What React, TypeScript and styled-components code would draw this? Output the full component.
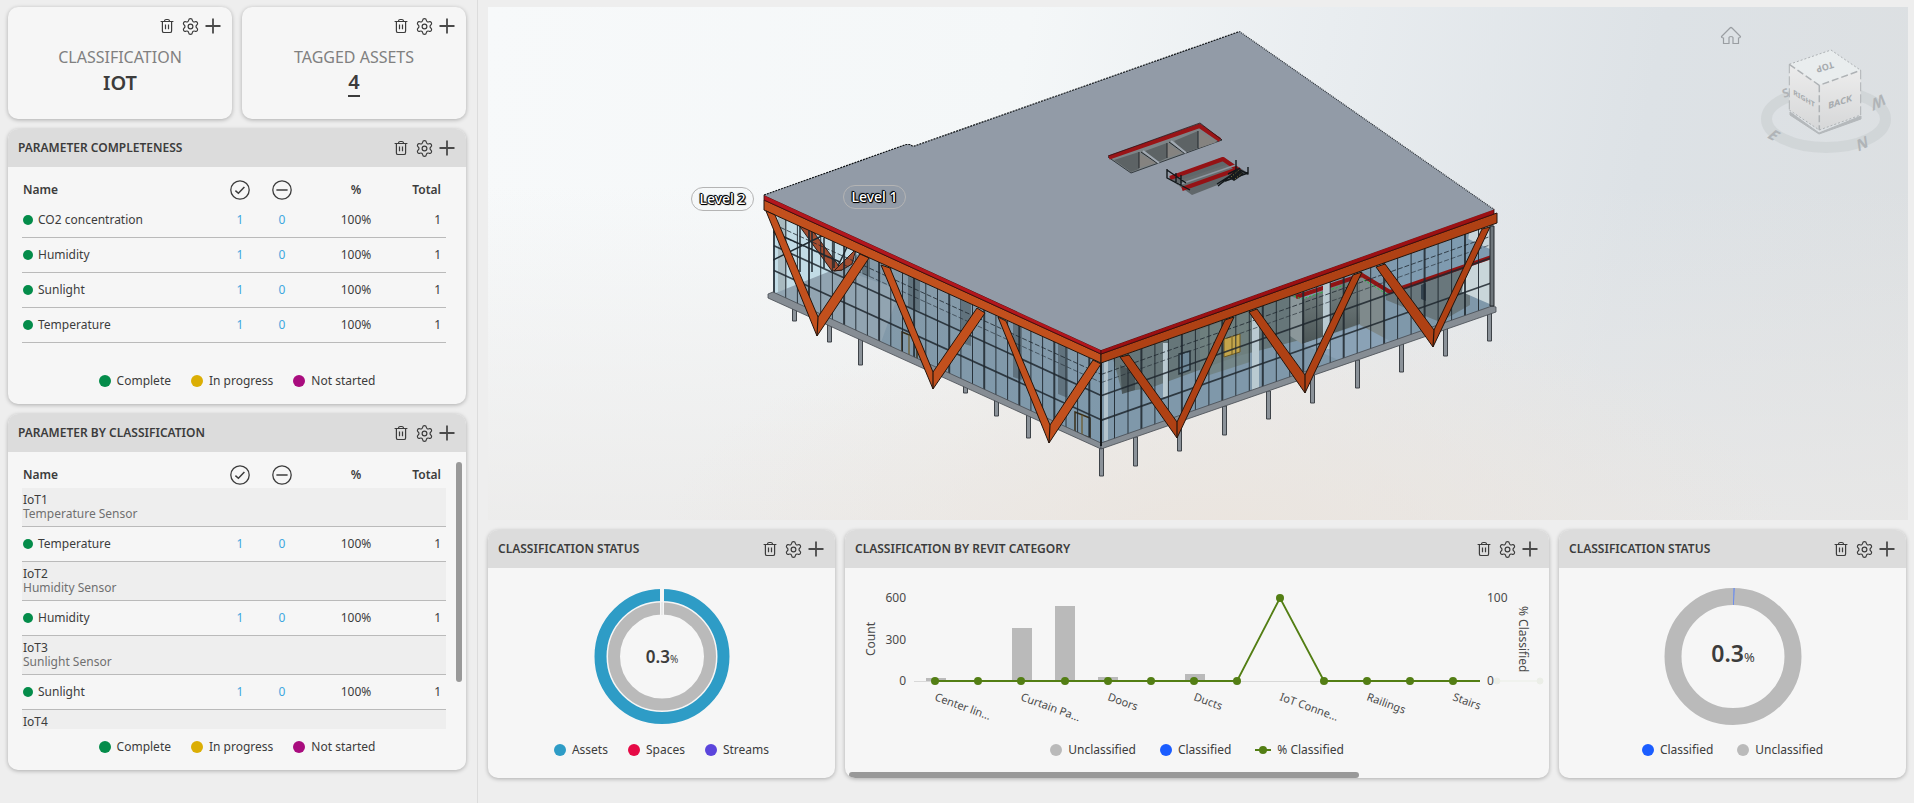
import React from "react";
import styled, { createGlobalStyle } from "styled-components";
import { Settings } from "lucide-react";

const GlobalStyle = createGlobalStyle`
  *, *::before, *::after { box-sizing: border-box; }
  body {
    margin: 0;
    background: #eeeeee;
    color: #3c3c3c;
    font-family: "Noto Sans", "Open Sans", sans-serif;
    font-size: 12px;
    line-height: 16px;
  }
  h2, h3, p, ul { margin: 0; padding: 0; }
  ul { list-style: none; }
`;

const Page = styled.div`
  display: flex;
  min-height: 100vh;
`;

const Sidebar = styled.aside`
  display: flex;
  flex-direction: column;
  flex: none;
  gap: 10px;
  width: 478px;
  padding: 7px 11px 24px 8px;
  border-right: 1px solid #dcdcdc;
`;

const Main = styled.main`
  display: flex;
  flex-direction: column;
  flex: 1;
  min-width: 0;
  gap: 10px;
  padding: 7px 6px 25px 10px;
`;

const MetricRow = styled.div`
  display: grid;
  grid-template-columns: 1fr 1fr;
  gap: 10px;
`;

const ChartRow = styled.div`
  display: grid;
  grid-template-columns: repeat(4, minmax(0, 1fr));
  gap: 10px;
  padding-right: 2px;
`;

const Card = styled.section<{ $span?: number }>`
  position: relative;
  display: flex;
  flex-direction: column;
  grid-column: span ${(p) => p.$span ?? 1};
  overflow: hidden;
  background: #f6f6f6;
  border-radius: 10px;
  box-shadow: 0 1px 4px rgba(0, 0, 0, 0.28);
`;

const CardHeader = styled.header`
  display: flex;
  align-items: center;
  justify-content: space-between;
  height: 38px;
  padding: 0 9px 0 10px;
  background: #dcdcdc;
`;

const CardTitle = styled.h2`
  font-size: 12px;
  font-weight: 600;
  text-transform: uppercase;
`;

const ActionBar = styled.div`
  display: flex;
  align-items: center;
  gap: 3px;
`;

const IconButton = styled.button`
  display: flex;
  align-items: center;
  justify-content: center;
  width: 20px;
  height: 20px;
  padding: 0;
  color: #3c3c3c;
  background: none;
  border: 0;
  cursor: pointer;
  svg { flex: none; }
`;

const Metric = styled(Card)`
  height: 112px;
  align-items: center;
  padding: 9px 9px 0;
  ${ActionBar} { align-self: flex-end; }
`;

const MetricLabel = styled.h2`
  margin-top: 9px;
  color: #808080;
  font-size: 16px;
  font-weight: 400;
  line-height: 24px;
`;

const MetricValue = styled.p`
  font-size: 20px;
  font-weight: 600;
  line-height: 28px;
`;

const MetricLink = styled.a`
  display: block;
  color: inherit;
  line-height: 26px;
  text-decoration: none;
  border-bottom: 2px solid #3c3c3c;
`;

const TableArea = styled.div<{ $height: number }>`
  display: flex;
  justify-content: space-between;
  height: ${(p) => p.$height}px;
  overflow: hidden;
  padding: 0 4px 0 14px;
`;

const VerticalThumb = styled.div`
  width: 6px;
  height: 220px;
  margin-top: 10px;
  background: #999999;
  border-radius: 3px;
`;

const HorizontalThumb = styled.div`
  position: absolute;
  bottom: 0;
  left: 4px;
  width: 510px;
  height: 6px;
  background: #999999;
  border-radius: 3px;
`;

const DataTable = styled.table`
  flex: none;
  align-self: flex-start;
  width: 424px;
  border-collapse: separate;
  border-spacing: 0;
  table-layout: fixed;
`;

const Cell = styled.td<{ $align?: string }>`
  height: 35px;
  padding: 0 5px 0 1px;
  text-align: ${(p) => p.$align ?? "left"};
  border-bottom: 1px solid #bababa;
`;

const CenterCell = styled(Cell)`
  padding: 0;
  text-align: center;
`;

const HeadCell = styled.th<{ $align?: string }>`
  height: 36px;
  padding: 10px 5px 0 1px;
  font-weight: 600;
  text-align: ${(p) => p.$align ?? "left"};
`;

const HeadCenter = styled(HeadCell)`
  padding: 10px 0 0;
  text-align: center;
  svg { display: block; margin: 0 auto; }
`;

const CountLink = styled.a`
  color: #3fa7e0;
  text-decoration: none;
`;

const NameLine = styled.span`
  display: flex;
  align-items: center;
  gap: 5px;
`;

const Dot = styled.span<{ $color: string; $size: number }>`
  flex: none;
  width: ${(p) => p.$size}px;
  height: ${(p) => p.$size}px;
  background: ${(p) => p.$color};
  border-radius: 50%;
`;

const GroupCell = styled.th`
  height: 39px;
  padding: 5px 1px 0;
  color: #3c3c3c;
  font-weight: 400;
  line-height: 14px;
  text-align: left;
  vertical-align: top;
  background: #eeeeee;
  border-bottom: 1px solid #bababa;
`;

const GroupNote = styled.span`
  display: block;
  color: #707070;
`;

const Legend = styled.ul<{ $tall?: boolean; $gap: number }>`
  display: flex;
  align-items: center;
  justify-content: center;
  gap: ${(p) => p.$gap}px;
  height: ${(p) => (p.$tall ? 50 : 41)}px;
  padding-bottom: 6px;
`;

const LegendItem = styled.li`
  display: flex;
  align-items: center;
  gap: 6px;
`;

const ChartArea = styled.div`
  display: flex;
  justify-content: center;
  height: 160px;
  svg { display: block; }
`;

const Viewer = styled.section`
  position: relative;
  flex: 1;
  min-height: 400px;
  overflow: hidden;
  background:
    radial-gradient(ellipse 40% 50% at 52% 106%, rgba(235, 228, 221, 0.9), rgba(235, 228, 221, 0)),
    linear-gradient(180deg, rgba(236, 236, 235, 0) 35%, rgba(234, 233, 232, 0.8) 100%),
    linear-gradient(100deg, #f7f9fa 0%, #f4f7f8 36%, #e9edf0 56%, #dde2e6 78%, #dcdfe1 100%);
`;

const Scene = styled.svg`
  position: absolute;
  inset: 0;
  width: 100%;
  height: 100%;
`;

const LevelTag = styled.button<{ $x: number; $y: number }>`
  position: absolute;
  left: ${(p) => p.$x}px;
  top: ${(p) => p.$y}px;
  width: 63px;
  height: 24px;
  padding: 0;
  color: #ffffff;
  font: 500 14px/22px "Noto Sans", sans-serif;
  text-shadow: 1px 0 #000, -1px 0 #000, 0 1px #000, 0 -1px #000, 1px 1px 1px #000, -1px -1px 1px #000;
  background: none;
  border: 1px solid #b4b4b4;
  border-radius: 12px;
`;

const HomeButton = styled.button`
  position: absolute;
  top: 18px;
  right: 165px;
  width: 24px;
  height: 24px;
  padding: 0;
  background: none;
  border: 0;
  svg { display: block; }
`;

const CubeDrawing = styled.svg`
  position: absolute;
  top: 33px;
  right: 8px;
`;

const TrashIcon = () => (
  <svg width="16" height="16" viewBox="0 0 16 16" fill="none" stroke="currentColor" strokeWidth="1.2">
    <path d="M1.6 3.5h12.8M5.3 3.4c.3-1.3 1-1.9 1.8-1.9h1.8c.8 0 1.5.6 1.8 1.9M3.4 3.6v9.3c0 1 .6 1.6 1.6 1.6h6c1 0 1.6-.6 1.6-1.6V3.6M6.5 6.6v4.6M9.5 6.6v4.6" />
  </svg>
);

const PlusIcon = () => (
  <svg width="16" height="16" viewBox="0 0 16 16" fill="none" stroke="#4a4a4a" strokeWidth="1.8">
    <path d="M8 .5v15M.5 8h15" />
  </svg>
);

const CheckCircle = () => (
  <svg width="20" height="20" viewBox="0 0 20 20" fill="none" stroke="#3c3c3c" strokeWidth="1.3" role="img" aria-label="Complete">
    <circle cx="10" cy="10" r="9.2" />
    <path d="M5.4 10.6l3 2.7 6-6.4" strokeWidth="1.5" />
  </svg>
);

const MinusCircle = () => (
  <svg width="20" height="20" viewBox="0 0 20 20" fill="none" stroke="#3c3c3c" strokeWidth="1.3" role="img" aria-label="Not started">
    <circle cx="10" cy="10" r="9.2" />
    <path d="M4.4 10h11.2" strokeWidth="1.6" />
  </svg>
);

const Actions = () => (
  <ActionBar>
    <IconButton aria-label="Delete"><TrashIcon /></IconButton>
    <IconButton aria-label="Settings"><Settings size={19} strokeWidth={1.5} /></IconButton>
    <IconButton aria-label="Add"><PlusIcon /></IconButton>
  </ActionBar>
);

type LegendEntry = { label: string; color: string; line?: boolean };

const STATUS_LEGEND: LegendEntry[] = [
  { label: "Complete", color: "#048c4a" },
  { label: "In progress", color: "#dbae04" },
  { label: "Not started", color: "#a90c7e" },
];

const LegendList = ({ entries, tall, gap = 20 }: { entries: LegendEntry[]; tall?: boolean; gap?: number }) => (
  <Legend $tall={tall} $gap={gap}>
    {entries.map((e) => (
      <LegendItem key={e.label}>
        {e.line ? (
          <svg width="16" height="12" viewBox="0 0 16 12">
            <path d="M0 6h16" stroke={e.color} strokeWidth="2" />
            <circle cx="8" cy="6" r="4" fill={e.color} />
          </svg>
        ) : (
          <Dot $color={e.color} $size={12} />
        )}
        {e.label}
      </LegendItem>
    ))}
  </Legend>
);

const TableHead = () => (
  <>
    <colgroup>
      <col />
      <col width="42" />
      <col width="42" />
      <col width="106" />
      <col width="37" />
    </colgroup>
    <thead>
      <tr>
        <HeadCell>Name</HeadCell>
        <HeadCenter><CheckCircle /></HeadCenter>
        <HeadCenter><MinusCircle /></HeadCenter>
        <HeadCenter>%</HeadCenter>
        <HeadCell $align="right">Total</HeadCell>
      </tr>
    </thead>
  </>
);

const ParameterRow = ({ name }: { name: string }) => (
  <tr>
    <Cell><NameLine><Dot $color="#048c4a" $size={10} />{name}</NameLine></Cell>
    <CenterCell><CountLink href="#complete">1</CountLink></CenterCell>
    <CenterCell><CountLink href="#missing">0</CountLink></CenterCell>
    <CenterCell>100%</CenterCell>
    <Cell $align="right">1</Cell>
  </tr>
);

const GROUPS: { id: string; note?: string; parameter?: string }[] = [
  { id: "IoT1", note: "Temperature Sensor", parameter: "Temperature" },
  { id: "IoT2", note: "Humidity Sensor", parameter: "Humidity" },
  { id: "IoT3", note: "Sunlight Sensor", parameter: "Sunlight" },
  { id: "IoT4" },
];

const PanelHeader = ({ title }: { title: string }) => (
  <CardHeader>
    <CardTitle>{title}</CardTitle>
    <Actions />
  </CardHeader>
);

const AssetDonut = () => (
  <svg width="150" height="160" viewBox="0 0 150 160">
    <circle cx="75" cy="88.5" r="61.5" fill="none" stroke="#2e9cc6" strokeWidth="12" />
    <circle cx="75" cy="88.5" r="48" fill="none" stroke="#bababa" strokeWidth="12" />
    <path d="M75 18v36" stroke="#f6f6f6" strokeWidth="4" />
    <path d="M75 34v13" stroke="#dddddd" strokeWidth="1" />
    <text x="75" y="95" textAnchor="middle" fill="#3c3c3c" fontSize="17" fontWeight="600">
      0.3<tspan fontSize="10" fontWeight="400">%</tspan>
    </text>
  </svg>
);

const ShareDonut = () => (
  <svg width="150" height="160" viewBox="0 0 150 160">
    <circle cx="75" cy="88.5" r="60" fill="none" stroke="#bababa" strokeWidth="17" />
    <path d="M75.5 20l-.4 17h.8l.8-17z" fill="#5f86f5" />
    <text x="75" y="94" textAnchor="middle" fill="#3c3c3c" fontSize="23" fontWeight="600">
      0.3<tspan fontSize="13" fontWeight="400">%</tspan>
    </text>
  </svg>
);

const STEP = 43;
const pointX = (i: number) => 90 + i * STEP + (i > 2 ? 1 : 0) + (i > 8 ? 1 : 0);
const BARS = [
  { x: 81, h: 3 },
  { x: 167, h: 53 },
  { x: 210, h: 75 },
  { x: 253, h: 4 },
  { x: 340, h: 7 },
];
const CATEGORY_LABELS = ["Center lin…", "Curtain Pa…", "Doors", "Ducts", "IoT Conne…", "Railings", "Stairs"];
const VALUES = [0, 0, 0, 0, 0, 0, 0, 0, 100, 0, 0, 0, 0];

const CategoryChart = () => (
  <svg width="100%" height="160" viewBox="0 0 704 160" fontSize="12" fill="#4a4a4a">
    <g textAnchor="end">
      <text x="61" y="34">600</text>
      <text x="61" y="76">300</text>
      <text x="61" y="117">0</text>
    </g>
    <text transform="translate(30 88) rotate(-90)">Count</text>
    <path d="M69 113.5h566" stroke="#d8d8d8" />
    {BARS.map((b) => (
      <rect key={b.x} x={b.x} y={113 - b.h} width="20" height={b.h} fill="#bababa" />
    ))}
    <polyline
      points={VALUES.map((v, i) => `${pointX(i)},${113 - v * 0.83}`).join(" ") + " 635,113"}
      fill="none"
      stroke="#537e14"
      strokeWidth="1.8"
    />
    {VALUES.map((v, i) => (
      <circle key={i} cx={pointX(i)} cy={113 - v * 0.83} r="4" fill="#537e14" />
    ))}
    <g fontSize="11">
      {CATEGORY_LABELS.map((label, i) => (
        <text key={label} transform={`translate(${pointX(i * 2) - 1} 132) rotate(20)`}>{label}</text>
      ))}
    </g>
    <text x="642" y="34">100</text>
    <text x="642" y="117">0</text>
    <text transform="translate(674 38) rotate(90)">% Classified</text>
    <g opacity="0.06" fill="#537e14" stroke="#537e14">
      <path d="M654 113h44" />
      <circle cx="652" cy="113" r="3" />
      <circle cx="695" cy="113" r="3" />
    </g>
  </svg>
);

type Face = { x0: number; x1: number; t0: number; t1: number; b0: number; b1: number };
const LEFT_FACE: Face = { x0: 774, x1: 1101, t0: 213, t1: 363, b0: 295, b1: 444 };
const RIGHT_FACE: Face = { x0: 1101, x1: 1492, t0: 363, t1: 224, b0: 445, b1: 308 };

const onFace = (f: Face, u: number, v: number) => {
  const top = f.t0 + (f.t1 - f.t0) * u;
  const bottom = f.b0 + (f.b1 - f.b0) * u;
  return `${(f.x0 + (f.x1 - f.x0) * u).toFixed(1)} ${(top + (bottom - top) * v).toFixed(1)}`;
};

const Glazing = ({ face, count }: { face: Face; count: number }) => (
  <g fill="none" stroke="#1e272e">
    {Array.from({ length: count + 1 }, (_, i) => (
      <path
        key={i}
        d={`M${onFace(face, i / count, 0)}L${onFace(face, i / count, 1)}`}
        strokeWidth={i % 3 === 0 ? 2 : 1}
        opacity={i % 3 === 0 ? 0.85 : 0.9}
      />
    ))}
    <path d={`M${onFace(face, 0, 0.14)}L${onFace(face, 1, 0.14)}`} strokeDasharray="5 2" opacity="0.8" />
    <path d={`M${onFace(face, 0, 0.24)}L${onFace(face, 1, 0.24)}`} strokeDasharray="5 2" opacity="0.6" />
    <path d={`M${onFace(face, 0, 0.4)}L${onFace(face, 1, 0.4)}`} strokeWidth="1.7" opacity="0.85" />
    <path d={`M${onFace(face, 0, 0.7)}L${onFace(face, 1, 0.7)}`} strokeWidth="1.7" opacity="0.85" />
  </g>
);

const LEFT_BRACES = [
  "M766 211L775 215L818 317L860 254L869 258L817 336Z",
  "M881 265L890 268L933 372L977 308L985 313L933 389Z",
  "M998 317L1006 321L1050 425L1093 360L1101 364L1049 443Z",
];
const RIGHT_BRACES = [
  "M1120 357L1129 355L1177 422L1225 320L1234 317L1177 438Z",
  "M1249 312L1257 309L1305 375L1353 275L1362 272L1305 393Z",
  "M1376 267L1385 264L1434 330L1482 229L1490 227L1433 347Z",
];
const PILES = [
  [792, 305, 321], [827, 320, 342], [858, 334, 365], [963, 382, 393], [994, 396, 416], [1026, 411, 438],
  [1099, 445, 476], [1133, 437, 466], [1177, 420, 451], [1222, 406, 435], [1266, 391, 419], [1310, 375, 403],
  [1355, 360, 388], [1399, 343, 372], [1443, 327, 356], [1487, 311, 341],
];

const Building = () => (
  <Scene viewBox="488 7 1420 513" preserveAspectRatio="xMidYMid slice" role="img" aria-label="Building model">
    <defs>
      <linearGradient id="glassLeft" x1="0" y1="0" x2="0" y2="1">
        <stop offset="0" stopColor="#889ba8" />
        <stop offset="1" stopColor="#7d98ab" />
      </linearGradient>
      <linearGradient id="wall" x1="0" y1="0" x2="0" y2="1">
        <stop offset="0" stopColor="#7b8788" />
        <stop offset="1" stopColor="#4c5657" />
      </linearGradient>
      <clipPath id="rightClip">
        <path d="M1101 363L1492 224V308L1101 445Z" />
      </clipPath>
      <clipPath id="leftClip">
        <path d="M773 213L1101 363V445L773 295Z" />
      </clipPath>
    </defs>

    <g fill="#8b9299" stroke="#3e4348" strokeWidth="1">
      {PILES.map(([x, top, bottom]) => (
        <path key={x} d={`M${x + 0.5} ${top}V${bottom}H${x + 4.5}V${top}Z`} />
      ))}
    </g>

    <path d="M773 213L1101 363V445L773 295Z" fill="url(#glassLeft)" />
    <g clipPath="url(#leftClip)">
      <path d="M773 213L860 252L838 272L812 279L773 295Z" fill="#c2dce6" />
      <path d="M778 215h9v74l-9 3z" fill="#a8bac0" />
      <path d="M773 294L838 268L900 290L880 345Z" fill="#91a4b1" />
      <path d="M798 224L812 230L842 270L832 271Z" fill="#a34d30" stroke="#2b1c16" />
      <path d="M834 271L856 249L852 264L842 270Z" fill="#a34d30" stroke="#2b1c16" />
      <path d="M800 225V272M812 231V272M824 238V268M773 260L850 222M773 232L840 262M834 268V242M848 245L838 266" stroke="#1f2a31" strokeWidth="1.5" fill="none" />
      <path d="M862 255h8v22l-8-3zM908 275h12v36l-12-4zM962 300h9v46l-9-3zM1013 322h9v58l-9-3zM1058 342h10v56l-10-4z" fill="#55666f" opacity="0.75" />
      <path d="M902 332l15 6v22l-15-6zM1075 412l15 6v20l-15-6z" fill="none" stroke="#3a2f18" strokeWidth="1.5" />
      <path d="M909 335v22M1082 415v20" stroke="#6b5726" strokeWidth="1.2" />
    </g>

    <path d="M1101 363L1492 224V308L1101 445Z" fill="#7f98aa" />
    <g clipPath="url(#rightClip)">
      <path d="M1112 355L1300 290L1300 340L1238 356L1150 388L1122 392Z" fill="#667679" />
      <path d="M1200 330L1250 310V362L1200 378Z" fill="#71827f" opacity="0.8" />
      <path d="M1120 365L1135 372V390L1122 394Z" fill="#4b575a" />
      <path d="M1290 296L1302 300V344L1290 336Z" fill="#8b979a" />
      <path d="M1302 300L1360 274V324L1302 344Z" fill="url(#wall)" />
      <path d="M1360 274L1385 292V345L1360 326Z" fill="#7f8a8c" />
      <path d="M1386 292L1470 262V305L1440 322L1386 300Z" fill="#69777c" />
      <path d="M1302 344L1360 325L1392 342L1350 365Z" fill="#8aa2b6" />
      <path d="M1470 225L1492 220V305L1462 292Z" fill="#c9d6da" />
      <path d="M1462 236L1492 250V258L1390 290V262Z" fill="#7f9bb0" />
      <path d="M1296 297L1362 275L1390 292L1492 257" fill="none" stroke="#8f1414" strokeWidth="4" />
      <path d="M1294 296L1302 299L1345 285M1364 280L1388 295" fill="none" stroke="#22c03a" strokeDasharray="2 2" />
      <path d="M1224 339L1240 334V352L1224 357Z" fill="#c3a54b" stroke="#6e5a20" />
      <path d="M1232 337v18" stroke="#6e5a20" />
      <path d="M1179 354L1190 351V370L1179 374Z" fill="#6f899a" stroke="#263239" strokeWidth="1.5" />
      <path d="M1421 285l5-2v18l-5-2z" fill="#33434f" />
      <path d="M1163 343h5v54h-5zM1252 318h7v72h-7zM1323 283h7v66h-7z" fill="#b9cad1" />
      <path d="M1104 361h4v80h-4z" fill="#b3c3cc" />
    </g>

    <Glazing face={LEFT_FACE} count={28} />
    <Glazing face={RIGHT_FACE} count={29} />

    <path d="M768 294L773 292L1101 443V449L768 298Z" fill="#868d94" stroke="#454a50" strokeWidth="0.8" />
    <path d="M1101 443L1492 306L1496 307V312L1101 449Z" fill="#868d94" stroke="#454a50" strokeWidth="0.8" />
    <path d="M1101 363V446" stroke="#15191c" strokeWidth="2" />
    <path d="M1490 226h4v80h-4z" fill="#6f777c" stroke="#22272a" />

    <g fill="#c2501d" stroke="#23150d" strokeWidth="1" strokeLinejoin="round">
      <path d="M764 200L1101 354V363L764 210Z" />
      {LEFT_BRACES.map((d) => <path key={d} d={d} />)}
    </g>
    <g fill="#af4114" stroke="#23150d" strokeWidth="1" strokeLinejoin="round">
      <path d="M1101 354L1494 214L1497 213V223L1101 363Z" />
      {RIGHT_BRACES.map((d) => <path key={d} d={d} />)}
    </g>
    <path d="M818 317L817 336M933 372V389M1050 425L1049 443M1177 422V438M1305 375V393M1434 330L1433 347" stroke="#23150d" strokeWidth="1.2" />

    <path d="M764 195L1101 350V354L764 200Z" fill="#b3161d" stroke="#3a0d0d" strokeWidth="0.8" />
    <path d="M1101 350L1494 209V214L1101 354Z" fill="#9c1013" stroke="#3a0d0d" strokeWidth="0.8" />
    <path d="M764 195L906 144.500L910 144.500L913 146.500L1239.500 31.500L1494 209.500L1101 350Z" fill="#929ba7" />
    <path d="M764 195L906 144.500L910 144.500L913 146.500L1239.500 31.500" fill="none" stroke="#111518" strokeWidth="1.2" strokeDasharray="2 1" />
    <path d="M1239.500 31.500L1494 209.500" fill="none" stroke="#2a3036" strokeWidth="1.2" strokeDasharray="1 1" />

    <g strokeLinejoin="round">
      <path d="M1108 157L1200 124L1222 140L1131 173Z" fill="#7d8487" stroke="#20262a" strokeWidth="0.8" />
      <path d="M1139 153V168L1156 163ZM1167 143V158L1182 153ZM1199 131V148L1217 142Z" fill="#858380" />
      <path d="M1114 160L1139 152V169L1131 172ZM1145 151L1167 143V158L1156 163ZM1174 141L1198 131V148L1184 153Z" fill="#5d6365" />
      <path d="M1139 152V168M1167 143V158M1198 131V148M1141 152L1157 163M1169 142L1184 153" stroke="#24292c" fill="none" />
      <path d="M1143 151L1159 163M1171 141L1186 153" stroke="#a1a9b2" strokeWidth="2" />
      <path d="M1109 157.500L1199.500 126L1220 140" fill="none" stroke="#9a1417" strokeWidth="4" strokeLinejoin="miter" />
      <path d="M1108 156L1200 123L1222 140" fill="none" stroke="#2c1214" strokeWidth="0.8" />

      <path d="M1168 178L1223 157L1248 173L1192 195Z" fill="#60676a" />
      <path d="M1180 180L1232 163L1240 169L1186 189Z" fill="#666c6e" />
      <path d="M1170 178L1223 159L1240 171" fill="none" stroke="#951215" strokeWidth="4" />
      <path d="M1182 189L1238 169" stroke="#951215" strokeWidth="4" />
      <path d="M1178 185L1236 165" stroke="#8d969f" strokeWidth="1.5" />
      <path d="M1167 169V178L1190 190M1167 170L1186 183M1176 173V182M1181 175V186M1225 181L1248 173M1236 160V170L1228 174M1248 167V174L1240 170M1218 186L1240 168M1217 184L1236 172" stroke="#12171a" strokeWidth="1.4" fill="none" />
      <path d="M1228 177L1238 168L1244 174L1234 181Z" fill="#161a1c" />
      <path d="M1231 177L1239 170M1235 179L1242 173" stroke="#b09a4a" strokeWidth="0.8" strokeDasharray="1 2" />
    </g>
  </Scene>
);

const ViewCube = () => (
  <CubeDrawing width="150" height="120" viewBox="1750 40 150 120" fontWeight="700">
    <defs>
      <linearGradient id="cubeSide" x1="0" y1="0" x2="0" y2="1">
        <stop offset="0" stopColor="#ececec" />
        <stop offset="1" stopColor="#d6d7d8" />
      </linearGradient>
    </defs>
    <ellipse cx="1826" cy="119" rx="59.500" ry="28.500" fill="none" stroke="#cfd3d6" strokeWidth="11" opacity="0.85" />
    <g fill="#b0b4b7" fontSize="15">
      <text transform="translate(1766 137) rotate(28) skewX(-20)">E</text>
      <text transform="translate(1867 135) rotate(152) skewX(-20)">N</text>
      <text transform="translate(1884 93) rotate(152) skewX(-20)">W</text>
      <text transform="translate(1784 98) rotate(-20)" fontSize="12">S</text>
    </g>
    <path d="M1790 112L1819 133L1861 116V119L1819 134L1790 115Z" fill="#b4b8bb" stroke="#b4b8bb" strokeWidth="1" />
    <path d="M1789.300 64.300L1831 50L1860.700 70.300L1819.300 85.300Z" fill="#e9edee" />
    <path d="M1789.300 64.300L1819.300 85.300V130L1789.300 110Z" fill="url(#cubeSide)" />
    <path d="M1819.300 85.300L1860.700 70.300V115L1819.300 130Z" fill="url(#cubeSide)" />
    <g fill="none" stroke="#aeb2b5">
      <path d="M1789.300 64.300L1831 50L1860.700 70.300" strokeDasharray="2 2" />
      <path d="M1789.300 64.300L1819.300 85.300L1860.700 70.300M1819.300 85.300V130" strokeWidth="1.500" strokeDasharray="7 3" />
      <path d="M1789.300 64.300V110M1860.700 70.300V115" strokeDasharray="9 3" />
      <path d="M1789.300 110L1819.300 130L1860.700 115" strokeDasharray="2 2" />
    </g>
    <g fill="#a7abae" textAnchor="middle">
      <text transform="translate(1804 101) skewY(31)" fontSize="7">RIGHT</text>
      <text transform="translate(1840 105) skewY(-19)" fontSize="9">BACK</text>
      <text transform="translate(1824 64) rotate(163)" fontSize="9">TOP</text>
    </g>
  </CubeDrawing>
);

export default function App() {
  return (
    <>
      <GlobalStyle />
      <Page>
        <Sidebar>
          <MetricRow>
            <Metric>
              <Actions />
              <MetricLabel>CLASSIFICATION</MetricLabel>
              <MetricValue>IOT</MetricValue>
            </Metric>
            <Metric>
              <Actions />
              <MetricLabel>TAGGED ASSETS</MetricLabel>
              <MetricValue><MetricLink href="#assets">4</MetricLink></MetricValue>
            </Metric>
          </MetricRow>
          <Card>
            <PanelHeader title="Parameter completeness" />
            <TableArea $height={196}>
              <DataTable>
                <TableHead />
                <tbody>
                  {["CO2 concentration", "Humidity", "Sunlight", "Temperature"].map((name) => (
                    <ParameterRow key={name} name={name} />
                  ))}
                </tbody>
              </DataTable>
            </TableArea>
            <LegendList entries={STATUS_LEGEND} />
          </Card>
          <Card>
            <PanelHeader title="Parameter by classification" />
            <TableArea $height={277}>
              <DataTable>
                <TableHead />
                <tbody>
                  {GROUPS.map((g) => (
                    <React.Fragment key={g.id}>
                      <tr>
                        <GroupCell colSpan={5} scope="rowgroup">
                          {g.id}
                          {g.note && <GroupNote>{g.note}</GroupNote>}
                        </GroupCell>
                      </tr>
                      {g.parameter && <ParameterRow name={g.parameter} />}
                    </React.Fragment>
                  ))}
                </tbody>
              </DataTable>
              <VerticalThumb />
            </TableArea>
            <LegendList entries={STATUS_LEGEND} />
          </Card>
        </Sidebar>
        <Main>
          <Viewer>
            <Building />
            <LevelTag $x={203} $y={180}>Level 2</LevelTag>
            <LevelTag $x={355} $y={178}>Level 1</LevelTag>
            <HomeButton aria-label="Home view">
              <svg width="24" height="24" viewBox="0 0 24 24" fill="none" stroke="#9a9ea2" strokeWidth="1.2">
                <path d="M2.500 11.500L11 3Q12 2 13 3L21.500 11.500Q21.500 13 19.500 13V18.500H14V12.500Q14 11.500 12 11.500T10 12.500V18.500H4.500V13Q2.500 13 2.500 11.500Z" />
              </svg>
            </HomeButton>
            <ViewCube />
          </Viewer>
          <ChartRow>
            <Card>
              <PanelHeader title="Classification status" />
              <ChartArea><AssetDonut /></ChartArea>
              <LegendList
                tall
                entries={[
                  { label: "Assets", color: "#2e9cc6" },
                  { label: "Spaces", color: "#e60a46" },
                  { label: "Streams", color: "#5b45dc" },
                ]}
              />
            </Card>
            <Card $span={2}>
              <PanelHeader title="Classification by Revit category" />
              <ChartArea><CategoryChart /></ChartArea>
              <LegendList
                tall
                gap={24}
                entries={[
                  { label: "Unclassified", color: "#bababa" },
                  { label: "Classified", color: "#1b5dff" },
                  { label: "% Classified", color: "#537e14", line: true },
                ]}
              />
              <HorizontalThumb />
            </Card>
            <Card>
              <PanelHeader title="Classification status" />
              <ChartArea><ShareDonut /></ChartArea>
              <LegendList
                tall
                gap={24}
                entries={[
                  { label: "Classified", color: "#1b5dff" },
                  { label: "Unclassified", color: "#bababa" },
                ]}
              />
            </Card>
          </ChartRow>
        </Main>
      </Page>
    </>
  );
}
